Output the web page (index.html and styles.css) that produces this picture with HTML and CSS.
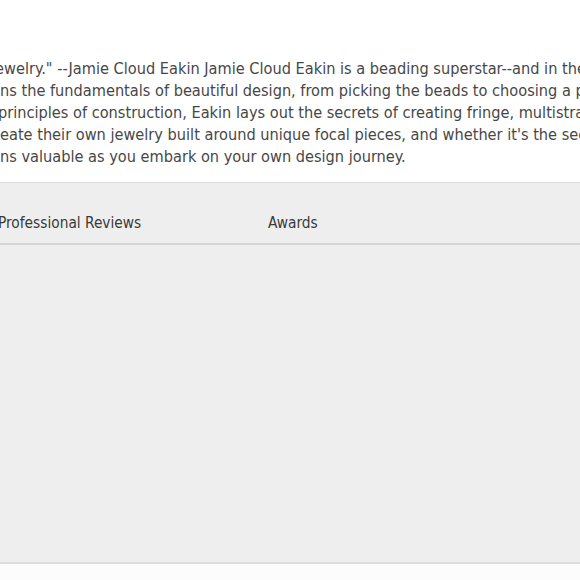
FILE: index.html
```html
<!DOCTYPE html>
<html>
<head>
<meta charset="utf-8">
<link rel="stylesheet" href="styles.css">
</head>
<body>
<div class="desc">
  <div class="line l1">jewelry." --Jamie Cloud Eakin Jamie Cloud Eakin is a beading superstar--and in the</div>
  <div class="line l2">ns the fundamentals of beautiful design, from picking the beads to choosing a pattern</div>
  <div class="line l3">principles of construction, Eakin lays out the secrets of creating fringe, multistrand</div>
  <div class="line l4">eate their own jewelry built around unique focal pieces, and whether it's the second</div>
  <div class="line l5">ns valuable as you embark on your own design journey.</div>
</div>
<div class="tabs-section">
  <div class="tabs">
    <div class="tab t1">Professional Reviews</div>
    <div class="tab t2">Awards</div>
  </div>
  <div class="panel"></div>
</div>
<div class="footer"></div>
</body>
</html>
```
FILE: styles.css
```css
html, body { margin: 0; padding: 0; background: #fff; overflow: hidden; }
body { width: 580px; height: 580px; font-family: "DejaVu Sans Condensed", "DejaVu Sans", sans-serif; }
.desc { padding-top: 58px; height: 182px; box-sizing: border-box; color: #474747; font-size: 16.2px; line-height: 22px; }
.line { white-space: nowrap; }
.l1 { margin-left: -9px; }
.l2 { margin-left: 0; }
.l3 { margin-left: -2px; }
.l4 { margin-left: 0; }
.l5 { margin-left: 0; }
.tabs-section { background: #eeeeee; border-top: 1px solid #dddddd; }
.tabs { display: flex; height: 62px; box-sizing: border-box; padding-top: 31px; align-items: flex-start; border-bottom: 2px solid #d6d6d6; color: #3a3a3a; font-size: 15.3px; line-height: 19px; }
.t1 { margin-left: -2px; width: 270px; }
.panel { height: 317px; }
.footer { border-top: 2px solid #dddddd; background: #fcfcfc; height: 20px; }
```
